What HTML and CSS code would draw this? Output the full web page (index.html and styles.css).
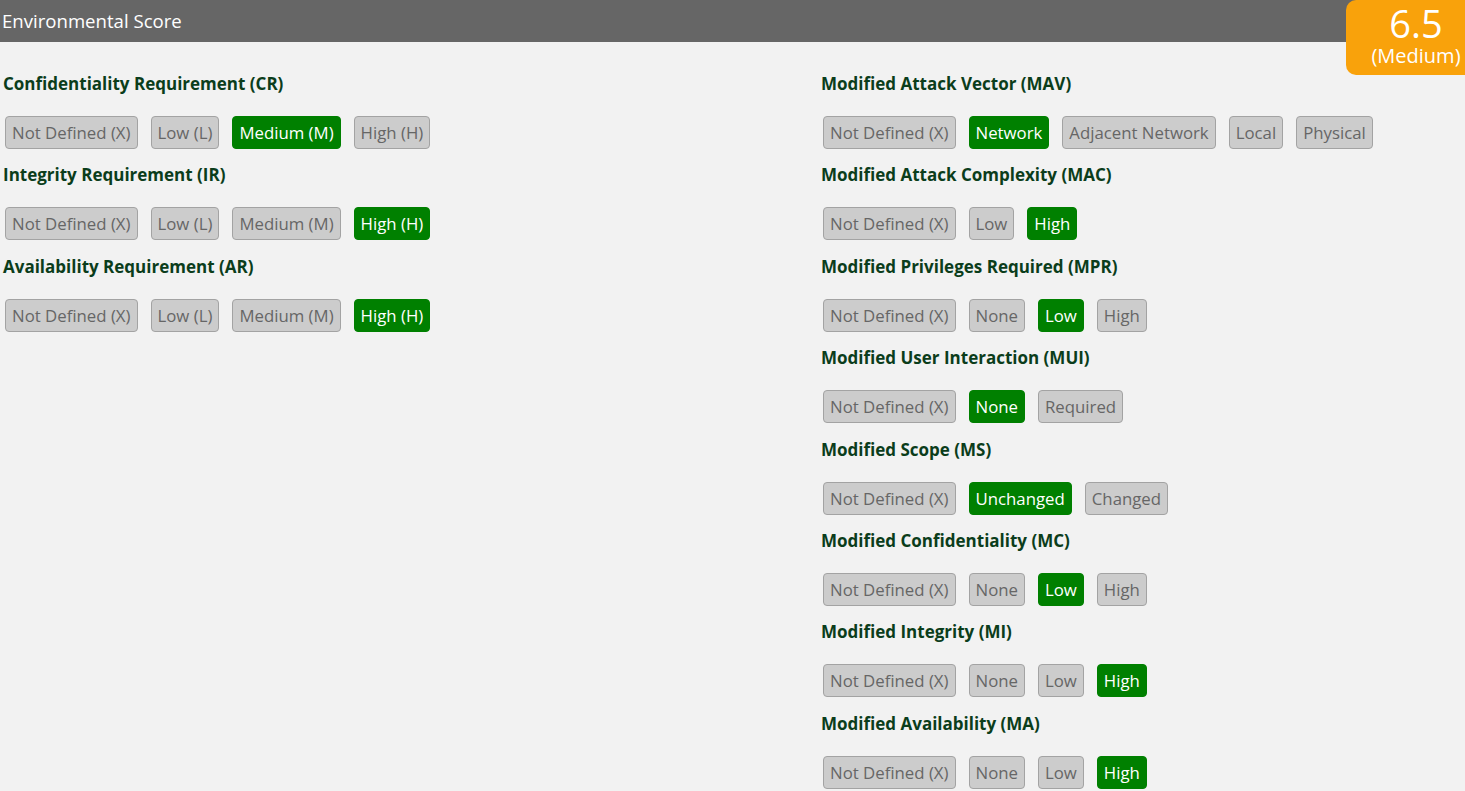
FILE: index.html
```html
<!DOCTYPE html>
<html lang="en">
<head>
<meta charset="utf-8">
<title>Environmental Score</title>
<link rel="stylesheet" href="styles.css">
</head>
<body>
<div class="panel">
  <div class="bar">Environmental Score</div>
  <div class="score"><div class="num">6.5</div><div class="sev">(Medium)</div></div>
  <div class="cols">
    <div class="col">
      <div class="metric">
        <h3>Confidentiality Requirement (CR)</h3>
        <div class="opts"><span class="btn">Not Defined (X)</span><span class="btn">Low (L)</span><span class="btn on">Medium (M)</span><span class="btn">High (H)</span></div>
      </div>
      <div class="metric">
        <h3>Integrity Requirement (IR)</h3>
        <div class="opts"><span class="btn">Not Defined (X)</span><span class="btn">Low (L)</span><span class="btn">Medium (M)</span><span class="btn on">High (H)</span></div>
      </div>
      <div class="metric">
        <h3>Availability Requirement (AR)</h3>
        <div class="opts"><span class="btn">Not Defined (X)</span><span class="btn">Low (L)</span><span class="btn">Medium (M)</span><span class="btn on">High (H)</span></div>
      </div>
    </div>
    <div class="col">
      <div class="metric">
        <h3>Modified Attack Vector (MAV)</h3>
        <div class="opts"><span class="btn">Not Defined (X)</span><span class="btn on">Network</span><span class="btn">Adjacent Network</span><span class="btn">Local</span><span class="btn">Physical</span></div>
      </div>
      <div class="metric">
        <h3>Modified Attack Complexity (MAC)</h3>
        <div class="opts"><span class="btn">Not Defined (X)</span><span class="btn">Low</span><span class="btn on">High</span></div>
      </div>
      <div class="metric">
        <h3>Modified Privileges Required (MPR)</h3>
        <div class="opts"><span class="btn">Not Defined (X)</span><span class="btn">None</span><span class="btn on">Low</span><span class="btn">High</span></div>
      </div>
      <div class="metric">
        <h3>Modified User Interaction (MUI)</h3>
        <div class="opts"><span class="btn">Not Defined (X)</span><span class="btn on">None</span><span class="btn">Required</span></div>
      </div>
      <div class="metric">
        <h3>Modified Scope (MS)</h3>
        <div class="opts"><span class="btn">Not Defined (X)</span><span class="btn on">Unchanged</span><span class="btn">Changed</span></div>
      </div>
      <div class="metric">
        <h3>Modified Confidentiality (MC)</h3>
        <div class="opts"><span class="btn">Not Defined (X)</span><span class="btn">None</span><span class="btn on">Low</span><span class="btn">High</span></div>
      </div>
      <div class="metric">
        <h3>Modified Integrity (MI)</h3>
        <div class="opts"><span class="btn">Not Defined (X)</span><span class="btn">None</span><span class="btn">Low</span><span class="btn on">High</span></div>
      </div>
      <div class="metric">
        <h3>Modified Availability (MA)</h3>
        <div class="opts"><span class="btn">Not Defined (X)</span><span class="btn">None</span><span class="btn">Low</span><span class="btn on">High</span></div>
      </div>
    </div>
  </div>
</div>
</body>
</html>
```
FILE: styles.css
```css
html, body {
  margin: 0;
  padding: 0;
  background: #f2f2f2;
  font-family: "Open Sans", "Liberation Sans", sans-serif;
  overflow: hidden;
}
.panel {
  position: relative;
}
.bar {
  height: 42px;
  background: #666666;
  color: #ffffff;
  font-size: 18.6px;
  line-height: 42px;
  padding-left: 2px;
}
.score {
  position: absolute;
  top: 0;
  right: 0;
  width: 98px;
  height: 75px;
  padding-left: 21px;
  background: #f9a20b;
  color: #ffffff;
  border-radius: 10px 0 0 10px;
  text-align: center;
}
.num {
  font-size: 38px;
  line-height: 46px;
}
.sev {
  font-size: 20px;
  line-height: 20px;
}
.cols {
  display: grid;
  grid-template-columns: 818px 1fr;
  padding: 30px 0 0 3px;
}
.metric {
  height: 91.4px;
}
.metric h3 {
  margin: 0;
  font-size: 17px;
  line-height: 24px;
  font-weight: 700;
  color: #0b3d1b;
}
.opts {
  display: flex;
  gap: 13px;
  margin-top: 20px;
  padding-left: 2px;
}
.btn {
  display: block;
  font-size: 16.8px;
  line-height: 21px;
  padding: 5px 6px;
  border: 1px solid #a3a3a3;
  border-radius: 4px;
  background: #cccccc;
  color: #666666;
  white-space: nowrap;
}
.btn.on {
  background: #008000;
  border-color: #008000;
  color: #ffffff;
}
```
